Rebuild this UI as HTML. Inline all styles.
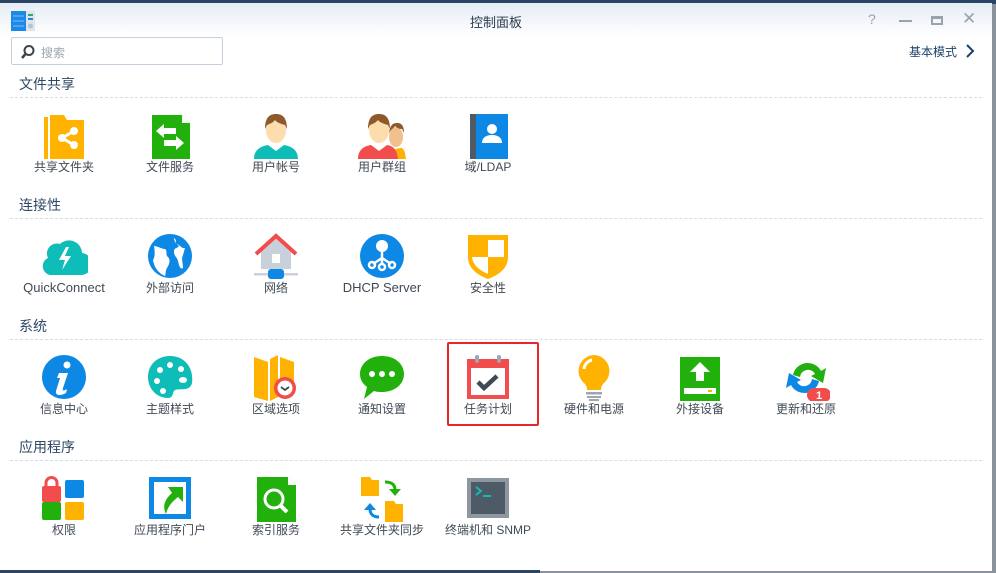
<!DOCTYPE html>
<html><head><meta charset="utf-8">
<style>
*{margin:0;padding:0;box-sizing:border-box}
body{width:996px;height:573px;overflow:hidden;background:#8a929c;font-family:"Liberation Sans","Noto Sans CJK SC",sans-serif;position:relative}
#topbar{position:absolute;left:0;top:0;width:996px;height:4px;background:#2a4563}
#win{position:absolute;left:0;top:3px;width:992px;height:568px;background:#fff}
#tb{position:absolute;left:0;top:0;width:992px;height:34px;background:linear-gradient(#e6edf5,#fff)}
#title{position:absolute;left:0;width:992px;top:9px;text-align:center;font-size:13px;color:#2b3b4e}
.ctl{position:absolute;top:8px;color:#9aa2ad;font-size:14px}
#search{position:absolute;left:11px;top:34px;width:212px;height:28px;border:1px solid #c5d0dc;border-radius:2px}
#search span{position:absolute;left:29px;top:6px;font-size:12px;color:#9ea6b0}
#basic{position:absolute;left:909px;top:40px;font-size:12px;color:#1e4168}
.h{position:absolute;left:19px;font-size:14px;color:#2e4866}
.dl{position:absolute;left:10px;width:972px;border-top:1px dashed #d6dde5}
.c{position:absolute;width:106px;text-align:center;font-size:12px;line-height:14px;color:#404a55}
.c svg{display:block;margin:0 auto 1px;width:48px;height:48px}
#sel{position:absolute;left:447px;top:339px;width:92px;height:84px;border:2px solid #e8262a;border-radius:2px}
#bot{position:absolute;left:0;top:570px;width:540px;height:3px;background:#2a4563}
</style></head><body>
<div id="topbar"></div>
<div id="win">
<div id="tb"></div>
<svg style="position:absolute;left:11px;top:8px" width="24" height="20"><rect x="0" y="0" width="15" height="20" fill="#1e88e5"/><g stroke="#6cc4ff" stroke-width="1"><line x1="2" y1="5" x2="13" y2="5"/><line x1="2" y1="10" x2="13" y2="10"/><line x1="2" y1="15" x2="13" y2="15"/></g><rect x="15" y="0" width="9" height="20" fill="#dfe5ea"/><rect x="17" y="3" width="5" height="2" fill="#2a7"/><rect x="17" y="7" width="5" height="2" fill="#1e88e5"/><circle cx="19.5" cy="15" r="2.5" fill="#b8c4cc"/></svg>
<div id="title">控制面板</div>
<div class="ctl" style="left:868px">?</div>
<div class="ctl" style="left:899px;top:17px;width:13px;border-top:2px solid #9aa2ad"></div>
<div class="ctl" style="left:931px;top:13px;width:12px;height:9px;border:2px solid #9aa2ad;border-top-width:3px"></div>
<div class="ctl" style="left:962px;top:6px;font-size:17px">✕</div>
<div id="search"><svg style="position:absolute;left:8px;top:6px" width="16" height="16"><circle cx="9" cy="6.5" r="4.5" fill="none" stroke="#3b4450" stroke-width="2"/><line x1="5.5" y1="10" x2="2" y2="14" stroke="#3b4450" stroke-width="2.5"/></svg><span>搜索</span></div>
<div id="basic">基本模式<svg style="position:absolute;left:56px;top:1px" width="10" height="14"><path d="M2 1l6 6-6 6" stroke="#1e4168" stroke-width="2" fill="none"/></svg></div>

<div class="h" style="top:71px">文件共享</div><div class="dl" style="top:94px"></div>
<div class="h" style="top:192px">连接性</div><div class="dl" style="top:215px"></div>
<div class="h" style="top:313px">系统</div><div class="dl" style="top:336px"></div>
<div class="h" style="top:434px">应用程序</div><div class="dl" style="top:457px"></div>

<div class="c" style="left:11px;top:108px"><svg viewBox="0 0 48 48"><rect x="4" y="6" width="4" height="42" fill="#ffb300"/><path d="M10 4h14l3 5h17v39H10z" fill="#ffb300"/><g fill="#fff"><circle cx="22" cy="27" r="4"/><circle cx="34" cy="20" r="4"/><circle cx="34" cy="34" r="4"/></g><path d="M22 27L34 20M22 27L34 34" stroke="#fff" stroke-width="3"/></svg>共享文件夹</div>
<div class="c" style="left:117px;top:108px"><svg viewBox="0 0 48 48"><path d="M6 4h30l8 8v36H6z" fill="#22b00c"/><path d="M36 4v8h8" fill="#fff"/><path d="M10 20l8-7v4h12v6H18v4z M38 32l-8-7v4H18v6h12v4z" fill="#fff"/></svg>文件服务</div>
<div class="c" style="left:223px;top:108px"><svg viewBox="0 0 48 48"><path d="M2 48c0-10 8-13 14-14l8 6 8-6c6 1 14 4 14 14z" fill="#0ebcb8"/><path d="M17 33l7 6 7-6-1-6H18z" fill="#fff"/><ellipse cx="24" cy="19" rx="10" ry="13" fill="#fddcae"/><path d="M13 18c0-12 5-15 11-15s11 3 11 15l-2-4c-3-1-8-2-10-5-2 3-6 4-8 5z" fill="#8d5a2b"/></svg>用户帐号</div>
<div class="c" style="left:329px;top:108px"><svg viewBox="0 0 48 48"><path d="M32 48c0-8 5-11 12-11 3 2 3 6 4 11z" fill="#ffb300"/><ellipse cx="38" cy="26" rx="7" ry="10" fill="#f2c08c"/><path d="M31 22c1-8 4-10 8-10 4 0 7 2 7 10l-2-4c-3 0-5-1-7-3-2 3-4 3-6 7z" fill="#8d5a2b"/><path d="M0 48c0-10 7-13 13-14l8 6 8-6c6 1 10 4 11 14z" fill="#f24c4c"/><path d="M14 33l7 6 7-6-1-6H15z" fill="#fff"/><ellipse cx="21" cy="19" rx="10" ry="13" fill="#fddcae"/><path d="M10 18c0-12 5-15 11-15s11 3 11 15l-2-4c-3-1-8-2-10-5-2 3-6 4-8 5z" fill="#8d5a2b"/></svg>用户群组</div>
<div class="c" style="left:435px;top:108px"><svg viewBox="0 0 48 48"><rect x="6" y="3" width="6" height="45" fill="#4e5a66"/><rect x="12" y="3" width="32" height="45" fill="#0d88e5"/><circle cx="28" cy="18" r="5" fill="#fff"/><path d="M18 32c0-6 5-8 10-8s10 2 10 8z" fill="#fff"/></svg>域/LDAP</div>

<div class="c" style="left:11px;top:229px"><svg viewBox="0 0 48 48"><path d="M10 43a9 9 0 0 1-2-17 10 10 0 0 1 12-14 13 13 0 0 1 22 9 8 8 0 0 1-2 22z" fill="#0ebcb8"/><path d="M26 15l-7 13h6l-3 10 9-14h-6l4-9z" fill="#fff"/></svg><span style="font-size:13px">QuickConnect</span></div>
<div class="c" style="left:117px;top:229px"><svg viewBox="0 0 48 48"><circle cx="24" cy="24" r="22" fill="#0d88e5"/><path d="M8 14c4 0 7 3 11 3 3 2 0 6 3 8 3 3 1 8-1 11-2 3-1 7-2 8-7-3-11-9-12-16 2-3 2-8 1-14zM28 6c3 2 1 5 3 6 3 1 5 5 8 4l-2 7c-2 4 0 8 0 13-3 2-4-3-5-7-1-4-4-5-4-9 0-5 3-3 5-6-2-2-5-4-5-8z" fill="#fff"/></svg>外部访问</div>
<div class="c" style="left:223px;top:229px"><svg viewBox="0 0 48 48"><path d="M9 20L24 7l15 13v17H9z" fill="#c8d1db"/><path d="M4 22L24 4l20 18" fill="none" stroke="#f24c4c" stroke-width="4"/><rect x="20" y="22" width="8" height="9" fill="#fff"/><rect x="2" y="41" width="44" height="2.5" fill="#c8d1db"/><rect x="16" y="37" width="16" height="10" rx="3" fill="#0d88e5"/></svg>网络</div>
<div class="c" style="left:329px;top:229px"><svg viewBox="0 0 48 48"><circle cx="24" cy="24" r="22" fill="#0d88e5"/><circle cx="24" cy="14" r="6" fill="#fff"/><path d="M24 18v14M24 26l-9 6M24 26l9 6" stroke="#fff" stroke-width="2.5" fill="none"/><g fill="none" stroke="#fff" stroke-width="2.5"><circle cx="14" cy="33" r="3"/><circle cx="24" cy="35" r="3"/><circle cx="34" cy="33" r="3"/></g></svg><span style="font-size:13px">DHCP Server</span></div>
<div class="c" style="left:435px;top:229px"><svg viewBox="0 0 48 48"><path d="M4 3h40v22c0 12-10 18-20 22C14 43 4 37 4 25z" fill="#ffb300"/><path d="M24 8h16v17H24zM8 25h16v17C15 38 9 33 8 25z" fill="#fff"/></svg>安全性</div>

<div class="c" style="left:11px;top:350px"><svg viewBox="0 0 48 48"><circle cx="24" cy="24" r="22" fill="#0d88e5"/><circle cx="27" cy="12" r="3.5" fill="#fff"/><path d="M19 20h9l-5 15c-1 3 1 3 4 1l-1 4c-5 3-11 3-10-2l4-13h-3z" fill="#fff"/></svg>信息中心</div>
<div class="c" style="left:117px;top:350px"><svg viewBox="0 0 48 48"><path d="M24 3C11 3 2 12 2 24s9 21 20 21c6 0 4-6 7-8 4-2 15 2 17-7C48 14 38 3 24 3z" fill="#0ebcb8"/><g fill="#fff"><circle cx="14" cy="17" r="3"/><circle cx="24" cy="12" r="3"/><circle cx="35" cy="16" r="3"/><circle cx="11" cy="28" r="3"/><circle cx="17" cy="38" r="3"/><ellipse cx="37" cy="27" rx="4" ry="3"/></g></svg>主题样式</div>
<div class="c" style="left:223px;top:350px"><svg viewBox="0 0 48 48"><path d="M2 4l14 5v39L2 44zM18 6l8-4v42l-8 4zM28 4l14 5v20H28z" fill="#ffb300"/><circle cx="33" cy="35" r="11" fill="#f24c4c"/><circle cx="33" cy="35" r="7.5" fill="#fff"/><path d="M29 34l4 3 4-3" stroke="#404a55" stroke-width="1.8" fill="none"/></svg>区域选项</div>
<div class="c" style="left:329px;top:350px"><svg viewBox="0 0 48 48"><path d="M24 3C11 3 2 11 2 21c0 6 3 10 7 13l-3 12 10-8c3 1 5 1 8 1 13 0 22-8 22-18S37 3 24 3z" fill="#22b00c"/><g fill="#fff"><circle cx="14" cy="21" r="3"/><circle cx="24" cy="21" r="3"/><circle cx="34" cy="21" r="3"/></g></svg>通知设置</div>
<div class="c" style="left:435px;top:350px"><svg viewBox="0 0 48 48"><rect x="3" y="6" width="42" height="40" fill="#f24c4c"/><rect x="7" y="15" width="34" height="27" fill="#fff"/><rect x="11" y="2" width="4" height="8" rx="2" fill="#9ea6b0"/><rect x="33" y="2" width="4" height="8" rx="2" fill="#9ea6b0"/><path d="M14 29l6 6 13-12" stroke="#404a55" stroke-width="4.5" fill="none"/></svg>任务计划</div>
<div class="c" style="left:541px;top:350px"><svg viewBox="0 0 48 48"><path d="M24 2a16 16 0 0 0-10 28c2 2 3 4 3 7h14c0-3 1-5 3-7A16 16 0 0 0 24 2z" fill="#ffb300"/><path d="M14 16a10 10 0 0 1 8-9" stroke="#fff" stroke-width="3" fill="none"/><g fill="#9ea6b0"><rect x="16" y="39" width="16" height="2.5"/><rect x="17" y="43" width="14" height="2"/><rect x="19" y="46" width="10" height="2"/></g></svg>硬件和电源</div>
<div class="c" style="left:647px;top:350px"><svg viewBox="0 0 48 48"><rect x="4" y="4" width="40" height="44" fill="#22b00c"/><path d="M24 9l-10 10h6v9h8v-9h6z" fill="#fff"/><rect x="8" y="35" width="32" height="6" fill="#fff"/><rect x="32" y="37" width="4" height="2" fill="#ffb300"/></svg>外接设备</div>
<div class="c" style="left:753px;top:350px"><svg viewBox="0 0 48 48"><path d="M11 22a15 15 0 0 1 28-4l5-3-3 15-12-7 4-2a8 8 0 0 0-15 3z" fill="#22b00c"/><path d="M37 28a15 15 0 0 1-28 4l-5 3 3-15 12 7-4 2a8 8 0 0 0 15-3z" fill="#0d88e5"/><rect x="25" y="35" width="24" height="14" rx="7" fill="#f24c4c"/><text x="37" y="46" font-size="11" font-weight="bold" fill="#fff" text-anchor="middle" font-family="Liberation Sans">1</text></svg>更新和还原</div>

<div class="c" style="left:11px;top:471px"><svg viewBox="0 0 48 48"><rect x="2" y="12" width="19" height="16" rx="2" fill="#f24c4c"/><path d="M6 13v-4a5.5 5.5 0 0 1 11 0v4" stroke="#f24c4c" stroke-width="3" fill="none"/><rect x="25" y="6" width="19" height="18" rx="2" fill="#0d88e5"/><rect x="2" y="28" width="19" height="18" rx="2" fill="#22b00c"/><rect x="25" y="28" width="19" height="18" rx="2" fill="#ffb300"/></svg>权限</div>
<div class="c" style="left:117px;top:471px"><svg viewBox="0 0 48 48"><rect x="3" y="3" width="42" height="42" fill="#0d88e5"/><rect x="8" y="8" width="32" height="32" fill="#fff"/><path d="M22 13h15v15l-5-5c-6 5-10 9-12 17-4-8-1-15 6-21z" fill="#22b00c"/></svg>应用程序门户</div>
<div class="c" style="left:223px;top:471px"><svg viewBox="0 0 48 48"><path d="M5 3h31l8 8v37H5z" fill="#22b00c"/><path d="M36 3v8h8" fill="#fff"/><circle cx="22" cy="25" r="9" fill="none" stroke="#fff" stroke-width="3"/><path d="M28 31l7 7" stroke="#fff" stroke-width="4"/></svg>索引服务</div>
<div class="c" style="left:329px;top:471px"><svg viewBox="0 0 48 48"><path d="M3 3h9l2 3h7v16H3z" fill="#ffb300"/><path d="M27 27h9l2 3h7v18H27z" fill="#ffb300"/><path d="M27 8c6 0 10 2 10 8" stroke="#22b00c" stroke-width="3" fill="none"/><path d="M31 15h12l-6 7z" fill="#22b00c"/><path d="M21 43c-6 0-9-3-9-8" stroke="#0d88e5" stroke-width="3" fill="none"/><path d="M6 36l6-7 6 7z" fill="#0d88e5"/></svg>共享文件夹同步</div>
<div class="c" style="left:435px;top:471px"><svg viewBox="0 0 48 48"><rect x="3" y="4" width="42" height="40" fill="#8e969f"/><rect x="7" y="8" width="34" height="32" fill="#4e5a66"/><path d="M12 13l5 4-5 4" stroke="#0ebcb8" stroke-width="2" fill="none"/><rect x="19" y="21" width="8" height="2" fill="#0ebcb8"/></svg>终端机和 SNMP</div>

<div id="sel"></div>
</div>
<div id="bot"></div>
</body></html>
